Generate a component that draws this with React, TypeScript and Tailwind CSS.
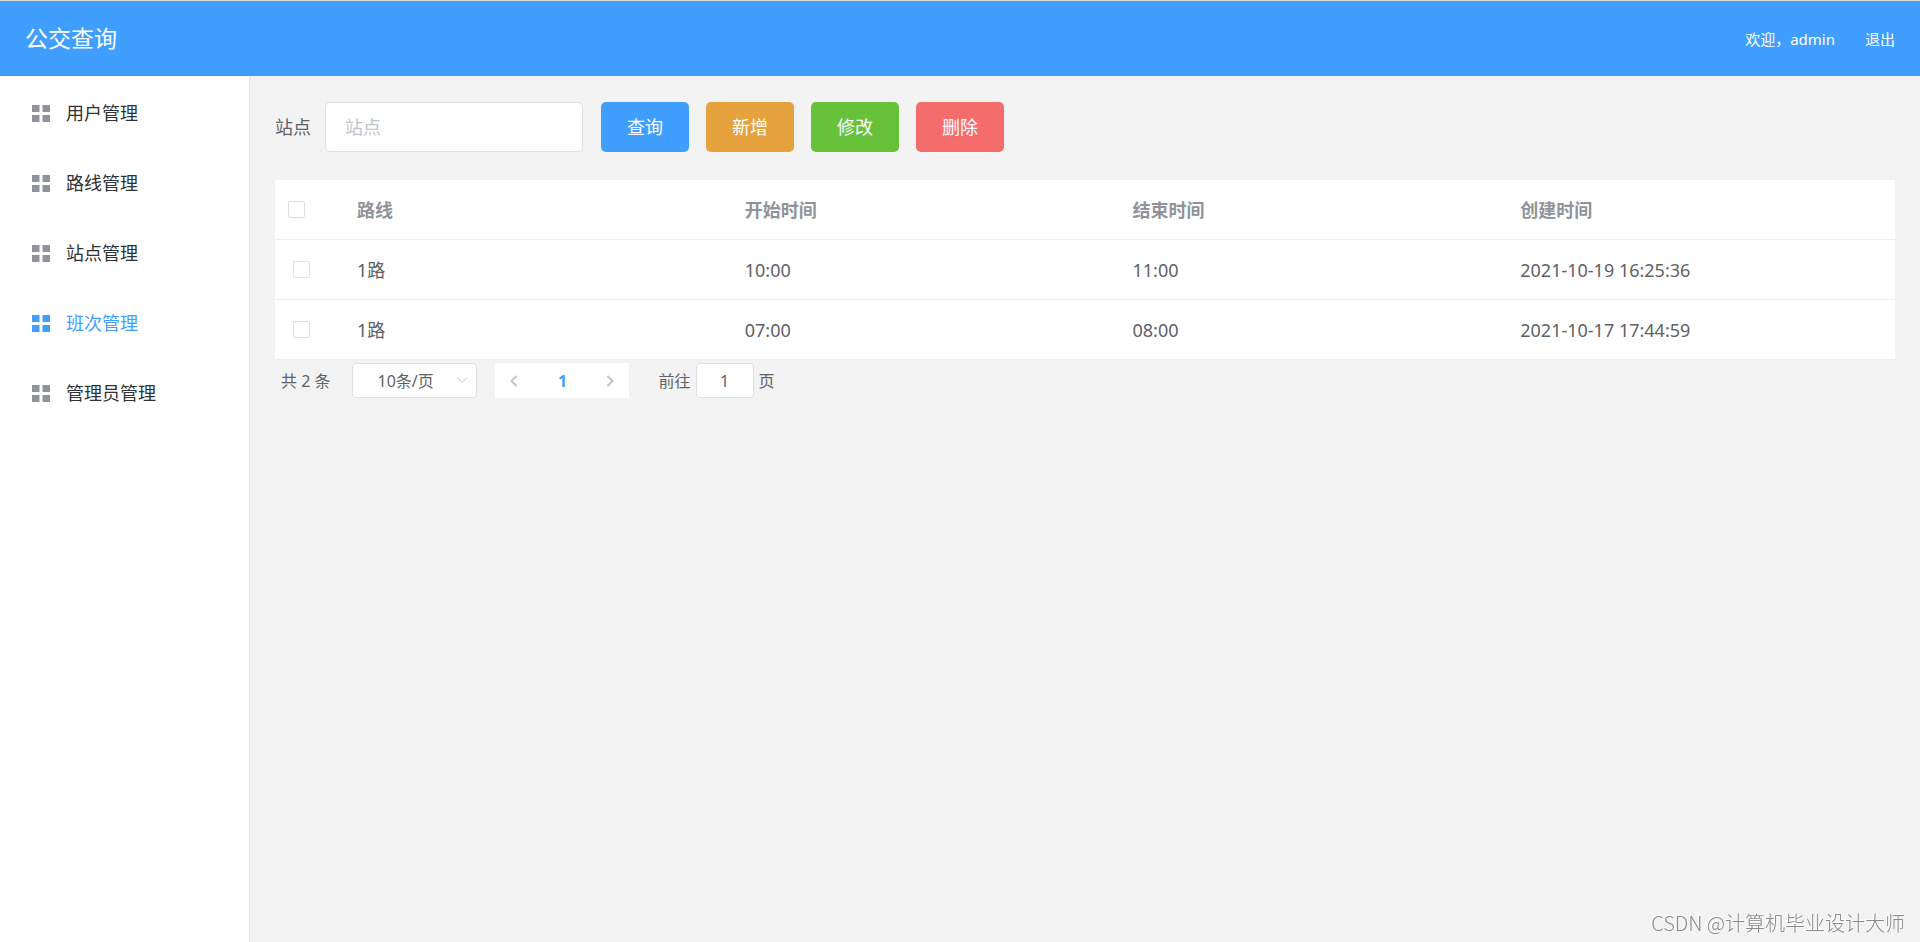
import React from "react";

const menu = ["用户管理", "路线管理", "站点管理", "班次管理", "管理员管理"];
const activeItem = "班次管理";

const actions = [
  { label: "查询", color: "bg-[#409eff]" },
  { label: "新增", color: "bg-[#e6a23c]" },
  { label: "修改", color: "bg-[#67c23a]" },
  { label: "删除", color: "bg-[#f56c6c]" },
];

const columns = ["路线", "开始时间", "结束时间", "创建时间"];

const rows = [
  ["1路", "10:00", "11:00", "2021-10-19 16:25:36"],
  ["1路", "07:00", "08:00", "2021-10-17 17:44:59"],
];

function GridIcon() {
  return (
    <svg viewBox="0 0 18 17" className="h-[17px] w-[18px]" fill="currentColor" aria-hidden="true">
      <rect x="0" y="0" width="7.5" height="7" />
      <rect x="10.5" y="0" width="7.5" height="7" />
      <rect x="0" y="10" width="7.5" height="7" />
      <rect x="10.5" y="10" width="7.5" height="7" />
    </svg>
  );
}

function Chevron({ d, className }: { d: string; className: string }) {
  return (
    <svg viewBox="0 0 12 12" className={className} fill="none" stroke="currentColor" aria-hidden="true">
      <path d={d} />
    </svg>
  );
}

function Tick({ label }: { label: string }) {
  return (
    <input
      type="checkbox"
      aria-label={label}
      className="block size-[17px] appearance-none rounded-[2px] border border-[#dcdfe6] bg-white checked:border-[#409eff] checked:bg-[#409eff]"
    />
  );
}

function Sidebar() {
  return (
    <nav className="w-[250px] shrink-0 border-r border-[#e6e6e6] bg-white pt-[2px]">
      <ul>
        {menu.map((item) => (
          <li key={item}>
            <a
              href="#"
              className={
                item === activeItem
                  ? "flex h-[70px] items-center gap-4 pl-8 text-[#409eff]"
                  : "flex h-[70px] items-center gap-4 pl-8 text-[#303133]"
              }
            >
              <span className={item === activeItem ? "text-[#409eff]" : "text-[#909399]"}>
                <GridIcon />
              </span>
              {item}
            </a>
          </li>
        ))}
      </ul>
    </nav>
  );
}

function SearchBar() {
  return (
    <form className="flex items-center gap-[18px]" onSubmit={(e) => e.preventDefault()}>
      <div className="flex items-center gap-[14px]">
        <label htmlFor="station">站点</label>
        <input
          id="station"
          placeholder="站点"
          className="h-[50px] w-[258px] rounded-[5px] border border-[#dcdfe6] bg-white px-[19px] outline-none placeholder:text-[#c0c4cc]"
        />
      </div>
      <div className="flex gap-[17px]">
        {actions.map((a) => (
          <button key={a.label} type="button" className={`h-[50px] w-[88px] rounded-[5px] text-white ${a.color}`}>
            {a.label}
          </button>
        ))}
      </div>
    </form>
  );
}

function ShiftTable() {
  return (
    <table className="w-full table-fixed border-separate border-spacing-0 bg-white text-left">
      <thead>
        <tr className="text-[#909399]">
          <th className="h-[60px] w-[69px] border-b border-[#ebeef5] pl-[13px]">
            <Tick label="全选" />
          </th>
          {columns.map((c) => (
            <th key={c} className="border-b border-[#ebeef5] px-[13px] font-bold">
              {c}
            </th>
          ))}
        </tr>
      </thead>
      <tbody>
        {rows.map((r) => (
          <tr key={r[3]}>
            <td className="h-[60px] border-b border-[#ebeef5] pl-[18px]">
              <Tick label={r[3]} />
            </td>
            {r.map((cell, i) => (
              <td key={i} className="border-b border-[#ebeef5] px-[13px]">
                {cell}
              </td>
            ))}
          </tr>
        ))}
      </tbody>
    </table>
  );
}

function Pagination() {
  return (
    <div className="flex items-center px-[6px] pt-[3px] text-base leading-5">
      <span>共 2 条</span>
      <div className="relative ml-[22px]">
        <select
          aria-label="每页条数"
          className="block h-[35px] w-[125px] appearance-none rounded-[4px] border border-[#dcdfe6] bg-white pl-6 outline-none"
        >
          <option>10条/页</option>
          <option>20条/页</option>
        </select>
        <Chevron
          d="M1 3.5 6 8.5 11 3.5"
          className="pointer-events-none absolute top-[11px] right-[9px] size-3 text-[#c0c4cc]"
        />
      </div>
      <div className="ml-[18px] flex h-[35px] items-center bg-white text-[#c0c4cc]">
        <button type="button" aria-label="上一页" disabled className="flex w-[38px] justify-center">
          <Chevron d="M8.5 1 3.5 6 8.5 11" className="size-3 stroke-2" />
        </button>
        <button type="button" className="w-[58px] font-bold text-[#409eff]">
          1
        </button>
        <button type="button" aria-label="下一页" disabled className="flex w-[38px] justify-center">
          <Chevron d="M3.5 1 8.5 6 3.5 11" className="size-3 stroke-2" />
        </button>
      </div>
      <label htmlFor="page" className="ml-[29px]">
        前往
      </label>
      <input
        id="page"
        defaultValue="1"
        className="mx-[5px] h-[35px] w-[58px] rounded-[4px] border border-[#dcdfe6] bg-white text-center outline-none"
      />
      <span>页</span>
    </div>
  );
}

export default function App() {
  return (
    <div className="flex min-h-screen flex-col bg-[#f3f3f3] font-['Noto_Sans','Noto_Sans_CJK_SC',sans-serif] text-[18px] leading-6 text-[#606266]">
      <header className="flex h-[76px] items-center justify-between border-t border-[#dcdcdc] bg-[#409eff] px-[25px] pb-[2px] text-white">
        <h1 className="text-[23px] leading-8">公交查询</h1>
        <div className="flex gap-[30px] pt-[2px] text-[15px]">
          <span>欢迎，admin</span>
          <a href="#">退出</a>
        </div>
      </header>
      <div className="flex grow">
        <Sidebar />
        <main className="flex min-w-0 grow flex-col px-[25px] pt-[26px]">
          <SearchBar />
          <div className="pt-7">
            <ShiftTable />
          </div>
          <Pagination />
        </main>
      </div>
      <div className="pointer-events-none fixed right-[15px] bottom-[5px] font-['Noto_Sans_CJK_SC',sans-serif] text-[20px] leading-7 font-light text-[#8a8a8a] [text-shadow:-1px_-1px_0_#ffffff]">
        CSDN @计算机毕业设计大师
      </div>
    </div>
  );
}
